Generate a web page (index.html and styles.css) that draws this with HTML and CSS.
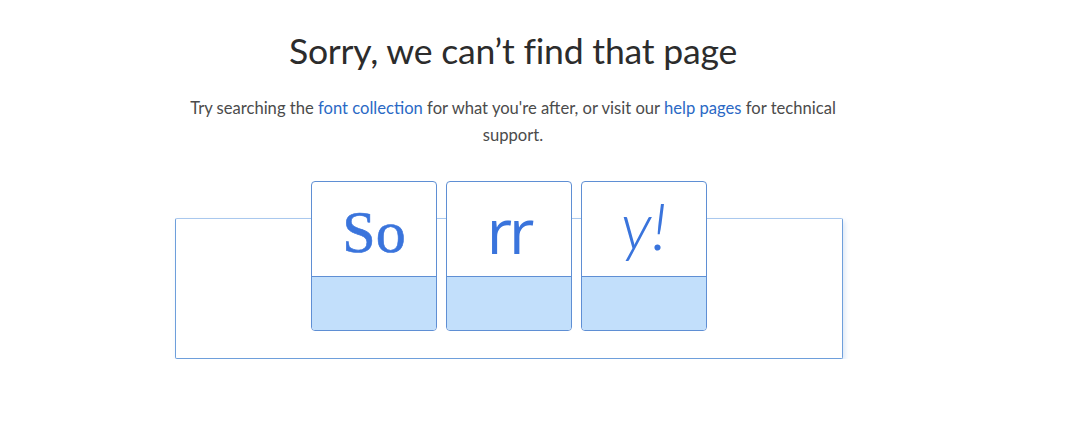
FILE: index.html
```html
<!DOCTYPE html>
<html lang="en">
<head>
<meta charset="utf-8">
<title>Page not found</title>
<link rel="stylesheet" href="styles.css">
</head>
<body>
<main class="page">
  <h1 class="title">Sorry, we can’t find that page</h1>
  <p class="lead">Try searching the <a href="#">font collection</a> for what you're after, or visit our <a href="#">help pages</a> for technical support.</p>
  <div class="stage">
    <div class="tiles">
      <div class="tile"><div class="face"><span class="glyph serif">So</span></div><div class="base"></div></div>
      <div class="tile"><div class="face"><span class="glyph sans">rr</span></div><div class="base"></div></div>
      <div class="tile"><div class="face"><span class="glyph script">y!</span></div><div class="base"></div></div>
    </div>
  </div>
</main>
</body>
</html>
```
FILE: styles.css
```css
html, body {
  margin: 0;
  padding: 0;
  background: #ffffff;
}
body {
  font-family: "Open Sans", "Liberation Sans", sans-serif;
  color: #2c2c2c;
}
.page {
  width: 1018px;
  display: flex;
  flex-direction: column;
  align-items: center;
}
.title {
  margin: 27px 0 0 8px;
  font-family: Lato, "Open Sans", sans-serif;
  font-weight: 400;
  font-size: 35.6px;
  line-height: 48px;
  color: #2c2c2c;
  letter-spacing: -0.2px;
}
.lead {
  margin: 20px 0 0 8px;
  width: 660px;
  text-align: center;
  font-family: Lato, "Open Sans", sans-serif;
  font-size: 16.6px;
  line-height: 27px;
  color: #4b4b4b;
}
.lead a {
  color: #2b69c5;
  text-decoration: none;
}
.stage {
  margin-top: 69px;
  width: 666px;
  height: 111px;
  border: 1px solid #6e9fdb;
  border-top-color: #a9c8ee;
  border-radius: 2px;
  box-shadow: 2px 3px 5px rgba(110, 159, 219, 0.25);
  padding-bottom: 28px;
  display: flex;
  justify-content: center;
}
.tiles {
  margin-top: -38px;
  display: flex;
  gap: 9px;
  height: 150px;
}
.tile {
  width: 124px;
  height: 148px;
  border: 1px solid #5f8fd4;
  border-radius: 4px;
  overflow: hidden;
  display: flex;
  flex-direction: column;
  background: #ffffff;
}
.face {
  height: 94px;
  flex: none;
  display: flex;
  align-items: center;
  justify-content: center;
  border-bottom: 1px solid #5f8fd4;
}
.base {
  flex: 1;
  background: #c2dffb;
}
.glyph {
  color: #3a74dc;
  line-height: 1;
}
.serif {
  font-family: "Liberation Serif", "DejaVu Serif", serif;
  font-size: 60px;
  margin-top: 6px;
  -webkit-text-stroke: 0.6px #3a74dc;
}
.sans {
  font-family: "Open Sans", sans-serif;
  font-size: 62px;
  font-weight: 500;
  letter-spacing: -3px;
  margin-top: 2px;
}
.script {
  font-family: Lato, sans-serif;
  font-style: italic;
  font-weight: 300;
  font-size: 66px;
  margin-top: -8px;
}
```
